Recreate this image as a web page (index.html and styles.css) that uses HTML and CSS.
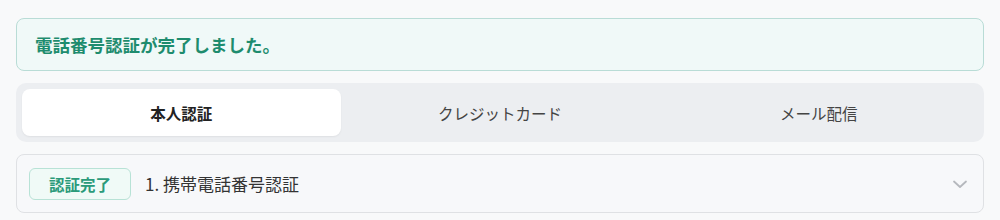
FILE: index.html
```html
<!DOCTYPE html>
<html lang="ja">
<head>
<meta charset="utf-8">
<link rel="stylesheet" href="styles.css">
</head>
<body>
<div class="page">
  <div class="alert">電話番号認証が完了しました。</div>
  <div class="tabs">
    <div class="tab active">本人認証</div>
    <div class="tab">クレジットカード</div>
    <div class="tab">メール配信</div>
  </div>
  <div class="item">
    <span class="badge">認証完了</span>
    <span class="title">1. 携帯電話番号認証</span>
    <svg class="chev" width="18" height="18" viewBox="0 0 18 18"><path d="M3 6.5 L9 12 L15 6.5" fill="none" stroke="#b5b8bd" stroke-width="1.8" stroke-linecap="round" stroke-linejoin="round"/></svg>
  </div>
</div>
</body>
</html>
```
FILE: styles.css
```css
html, body {
  margin: 0;
  padding: 0;
  background: #f8f9fa;
}
body {
  font-family: "Noto Sans CJK JP", "Noto Sans", sans-serif;
}
.page {
  padding: 18px 16px 0 16px;
  display: flex;
  flex-direction: column;
  gap: 12px;
}
.alert {
  box-sizing: border-box;
  height: 53px;
  display: flex;
  align-items: center;
  padding: 0 18px;
  background: #f0f9f8;
  border: 1.5px solid #b9dcd6;
  border-radius: 8px;
  color: #1e8c6e;
  font-weight: 700;
  font-size: 17.5px;
}
.tabs {
  box-sizing: border-box;
  height: 59px;
  padding: 6px;
  background: #eceef1;
  border-radius: 10px;
  display: grid;
  grid-template-columns: 1fr 1fr 1fr;
}
.tab {
  display: flex;
  align-items: center;
  justify-content: center;
  font-size: 15.5px;
  color: #444;
  border-radius: 8px;
}
.tab.active {
  background: #ffffff;
  color: #222;
  font-weight: 700;
  box-shadow: 0 1px 2px rgba(0,0,0,0.06);
}
.item {
  box-sizing: border-box;
  height: 59px;
  display: flex;
  align-items: center;
  padding: 0 12px;
  background: #f7f8fa;
  border: 1px solid #dfe1e4;
  border-radius: 8px;
}
.badge {
  box-sizing: border-box;
  height: 32px;
  width: 102px;
  display: flex;
  align-items: center;
  justify-content: center;
  border: 1px solid #b8e2d6;
  background: #f0faf7;
  border-radius: 6px;
  color: #2b9a7a;
  font-size: 15.5px;
  font-weight: 700;
}
.title {
  margin-left: 14px;
  font-size: 17px;
  color: #333;
  flex: 1;
}
.chev {
  margin-right: 2px;
}
```
